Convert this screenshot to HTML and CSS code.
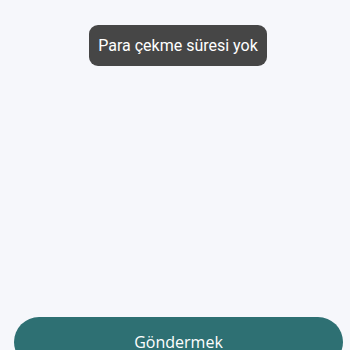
FILE: index.html
```html
<!DOCTYPE html>
<html lang="tr">
<head>
<meta charset="utf-8">
<link rel="stylesheet" href="styles.css">
</head>
<body>
<div class="screen">
  <div class="content"></div>
  <div class="footer">
    <button class="submit">Göndermek</button>
  </div>
  <div class="toast">Para çekme süresi yok</div>
</div>
</body>
</html>
```
FILE: styles.css
```css
html, body {
  margin: 0;
  padding: 0;
  background: #f6f7fb;
  overflow: hidden;
}
.screen {
  position: relative;
  width: 350px;
  height: 350px;
  display: flex;
  flex-direction: column;
  overflow: hidden;
}
.content {
  flex: 1;
}
.footer {
  padding: 0 7px 0 14px;
  height: 33px;
}
.submit {
  display: block;
  width: 100%;
  height: 50px;
  border: none;
  border-radius: 25px;
  background: #2e7073;
  color: #ffffff;
  font-family: "Open Sans", "Noto Sans", sans-serif;
  font-size: 16px;
  padding: 0;
  margin: 0;
}
.toast {
  position: absolute;
  top: 25px;
  left: 89px;
  width: 178px;
  height: 41px;
  box-sizing: border-box;
  border-radius: 9px;
  background: #464646;
  color: #ffffff;
  font-family: Roboto, "Liberation Sans", sans-serif;
  font-size: 16px;
  display: flex;
  align-items: center;
  justify-content: center;
  white-space: nowrap;
}
```
